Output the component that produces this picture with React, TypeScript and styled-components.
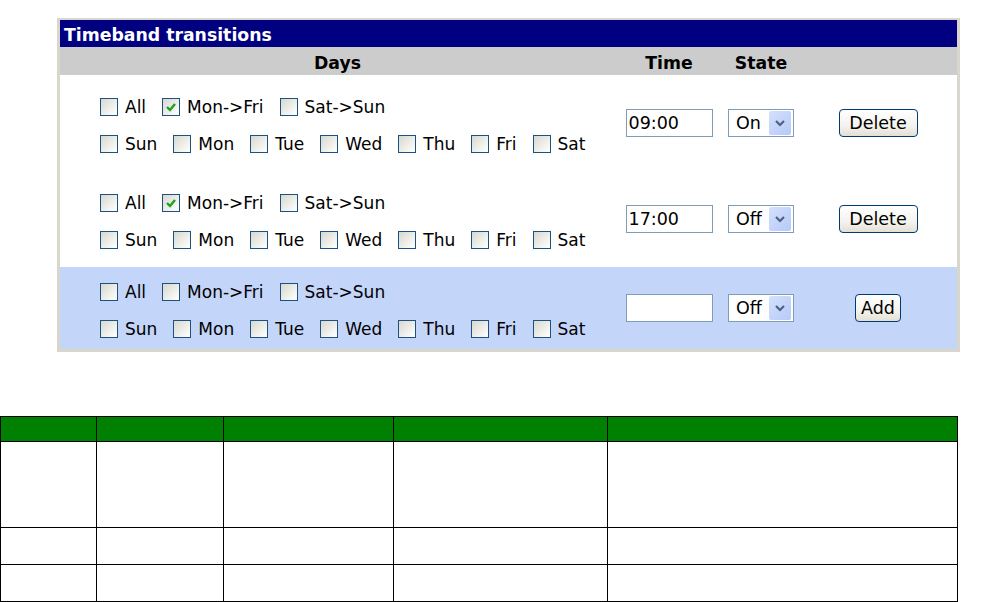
import React from "react";
import styled, { createGlobalStyle } from "styled-components";

const GlobalStyle = createGlobalStyle`
  body {
    margin: 0;
    background: #fff;
    font-family: "DejaVu Sans", Verdana, sans-serif;
    color: #000;
  }
`;

const COLS = "555px 108px 76px 158px";

const Panel = styled.div`
  margin: 18px 0 0 57px;
  width: 897px;
  border: 3px solid #d9d6cc;
  border-top-width: 2px;
`;

const TitleBar = styled.div`
  background: #000080;
  color: #fff;
  font-weight: bold;
  font-size: 17.3px;
  height: 27px;
  line-height: 31px;
  padding-left: 4px;
  box-sizing: border-box;
`;

const HeaderRow = styled.div`
  display: grid;
  grid-template-columns: ${COLS};
  align-items: center;
  height: 28px;
  padding-top: 3px;
  box-sizing: border-box;
  background: #cccccc;
`;

const HeaderCell = styled.div`
  font-weight: bold;
  font-size: 17.3px;
  text-align: center;
`;

const Row = styled.div<{ $new?: boolean }>`
  display: grid;
  grid-template-columns: ${COLS};
  align-items: center;
  height: ${(p) => (p.$new ? 82 : 96)}px;
  background: ${(p) => (p.$new ? "#c4d5fa" : "#fff")};
`;

const DaysCell = styled.div`
  display: flex;
  flex-direction: column;
  padding: 4px 0 0 40px;
`;

const CheckLine = styled.div`
  display: flex;
  align-items: center;
  gap: 16px;
  height: 37px;
`;

const Option = styled.label`
  display: flex;
  align-items: center;
  gap: 7px;
  font-size: 17px;
`;

const Box = styled.span`
  width: 18px;
  height: 18px;
  box-sizing: border-box;
  border: 1px solid #1c5180;
  background: linear-gradient(135deg, #d8d8d0 0%, #f4f4f0 70%, #fff 100%);
  display: flex;
  align-items: center;
  justify-content: center;
`;

const CenterCell = styled.div`
  display: flex;
  justify-content: center;
`;

const TimeInput = styled.input`
  width: 87px;
  height: 28px;
  box-sizing: border-box;
  border: 1px solid #7f9db9;
  background: #fff;
  font-family: inherit;
  font-size: 17.5px;
  padding: 0 2px;
  outline: none;
`;

const SelectBox = styled.div`
  width: 66px;
  height: 28px;
  box-sizing: border-box;
  border: 1px solid #7f9db9;
  background: #fff;
  display: flex;
  align-items: center;
  justify-content: space-between;
  padding: 0 2px 0 7px;
  font-size: 17.5px;
`;

const Arrow = styled.span`
  width: 22px;
  height: 24px;
  border-radius: 2px;
  background: linear-gradient(135deg, #d4e0fc, #b6c9f7);
  display: flex;
  align-items: center;
  justify-content: center;
`;

const Button = styled.button<{ $width: number }>`
  width: ${(p) => p.$width}px;
  height: 28px;
  border: 1px solid #003c74;
  border-radius: 4px;
  background: linear-gradient(#ffffff 0%, #f4f3ee 60%, #e3e0d3 100%);
  font-family: inherit;
  font-size: 17.5px;
  color: #000;
  padding: 0;
`;

const DataGrid = styled.div`
  margin-top: 64px;
  width: 958px;
  box-sizing: border-box;
  display: grid;
  grid-template-columns: 95px 126px 169px 213px 349px;
  grid-template-rows: 24px 85px 36px 36px;
  gap: 1px;
  padding: 1px;
  background: #000;
`;

const GreenCell = styled.div`
  background: #008000;
`;

const WhiteCell = styled.div`
  background: #fff;
`;

const Check = ({ checked, label }: { checked?: boolean; label: string }) => (
  <Option>
    <Box>
      {checked && (
        <svg width="12" height="12" viewBox="0 0 12 12">
          <path
            d="M2 6 L5 9 L10 3"
            fill="none"
            stroke="#21a121"
            strokeWidth="2.4"
          />
        </svg>
      )}
    </Box>
    {label}
  </Option>
);

const Select = ({ value }: { value: string }) => (
  <SelectBox>
    {value}
    <Arrow>
      <svg width="12" height="10" viewBox="0 0 12 10">
        <path
          d="M2 3 L6 7 L10 3"
          fill="none"
          stroke="#4d6185"
          strokeWidth="2.2"
        />
      </svg>
    </Arrow>
  </SelectBox>
);

const days = ["Sun", "Mon", "Tue", "Wed", "Thu", "Fri", "Sat"];

interface Transition {
  time: string;
  state: string;
  weekdays: boolean;
  isNew?: boolean;
}

const transitions: Transition[] = [
  { time: "09:00", state: "On", weekdays: true },
  { time: "17:00", state: "Off", weekdays: true },
  { time: "", state: "Off", weekdays: false, isNew: true },
];

export default function App() {
  return (
    <>
      <GlobalStyle />
      <Panel>
        <TitleBar>Timeband transitions</TitleBar>
        <HeaderRow>
          <HeaderCell>Days</HeaderCell>
          <HeaderCell>Time</HeaderCell>
          <HeaderCell>State</HeaderCell>
          <HeaderCell />
        </HeaderRow>
        {transitions.map((t, i) => (
          <Row key={i} $new={t.isNew}>
            <DaysCell>
              <CheckLine>
                <Check label="All" />
                <Check label="Mon->Fri" checked={t.weekdays} />
                <Check label="Sat->Sun" />
              </CheckLine>
              <CheckLine>
                {days.map((d) => (
                  <Check key={d} label={d} />
                ))}
              </CheckLine>
            </DaysCell>
            <CenterCell>
              <TimeInput defaultValue={t.time} />
            </CenterCell>
            <CenterCell>
              <Select value={t.state} />
            </CenterCell>
            <CenterCell>
              {t.isNew ? (
                <Button $width={46}>Add</Button>
              ) : (
                <Button $width={79}>Delete</Button>
              )}
            </CenterCell>
          </Row>
        ))}
      </Panel>
      <DataGrid>
        {Array.from({ length: 5 }).map((_, i) => (
          <GreenCell key={"h" + i} />
        ))}
        {Array.from({ length: 15 }).map((_, i) => (
          <WhiteCell key={"c" + i} />
        ))}
      </DataGrid>
    </>
  );
}
